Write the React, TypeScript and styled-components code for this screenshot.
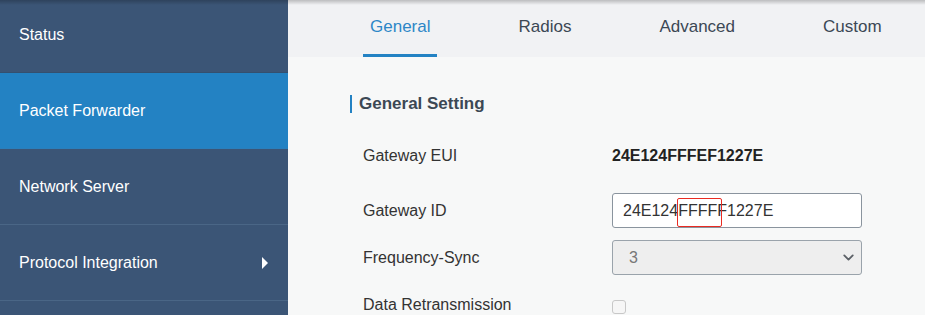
import { ChevronDown } from 'lucide-react';
import styled, { createGlobalStyle } from 'styled-components';

const GlobalStyle = createGlobalStyle`
  html, body {
    margin: 0;
    padding: 0;
    background: #f7f8f8;
    font-family: Arial, 'Liberation Sans', sans-serif;
  }
  * {
    box-sizing: border-box;
  }
`;

const menu = [
  { label: 'Status' },
  { label: 'Packet Forwarder', active: true },
  { label: 'Network Server' },
  { label: 'Protocol Integration', arrow: true },
];

const tabs = ['General', 'Radios', 'Advanced', 'Custom'];

export default function App() {
  return (
    <>
      <GlobalStyle />
      <Page>
        <Sidebar>
          <MenuList>
            {menu.map((item) => (
              <MenuItem key={item.label} $active={item.active}>
                {item.label}
                {item.arrow && (
                  <Arrow width="6" height="12" viewBox="0 0 6 12">
                    <polygon points="0,0 6,6 0,12" fill="#fff" />
                  </Arrow>
                )}
              </MenuItem>
            ))}
          </MenuList>
        </Sidebar>
        <Main>
          <TabBar>
            {tabs.map((t, i) => (
              <Tab key={t} $active={i === 0}>
                {t}
              </Tab>
            ))}
          </TabBar>
          <Content>
            <SectionTitle>General Setting</SectionTitle>
            <Form>
              <Row $gap={20}>
                <Label>Gateway EUI</Label>
                <Value>24E124FFFEF1227E</Value>
              </Row>
              <Row $gap={12}>
                <Label>Gateway ID</Label>
                <InputWrap>
                  <TextInput defaultValue="24E124FFFFF1227E" />
                  <Highlight />
                </InputWrap>
              </Row>
              <Row $gap={12}>
                <Label>Frequency-Sync</Label>
                <SelectBox>
                  <span>3</span>
                  <ChevronDown size={17} strokeWidth={2.6} color="#5b6066" />
                </SelectBox>
              </Row>
              <Row $gap={0}>
                <Label>Data Retransmission</Label>
                <Checkbox />
              </Row>
            </Form>
          </Content>
        </Main>
      </Page>
    </>
  );
}

const Page = styled.div`
  display: flex;
  width: 925px;
  height: 315px;
  overflow: hidden;
  position: relative;

  &::after {
    content: '';
    position: absolute;
    left: 0;
    right: 0;
    top: 0;
    height: 5px;
    background: linear-gradient(rgba(0, 0, 0, 0.22), rgba(0, 0, 0, 0));
    pointer-events: none;
  }
`;

const Sidebar = styled.nav`
  width: 288px;
  flex-shrink: 0;
  background: #3b5576;
  overflow: hidden;
`;

const MenuList = styled.div`
  margin-top: -3px;
`;

const MenuItem = styled.div<{ $active?: boolean }>`
  height: 76px;
  display: flex;
  align-items: center;
  justify-content: space-between;
  padding: 0 20px 0 19px;
  font-size: 16px;
  color: #fff;
  background: ${(p) => (p.$active ? '#2382c3' : '#3b5576')};
  border-bottom: 1px solid ${(p) => (p.$active ? '#2a7fbc' : '#4a6686')};

  &:first-child {
    border-bottom-color: #34506f;
  }
`;

const Arrow = styled.svg`
  display: block;
`;

const Main = styled.main`
  flex: 1;
  display: flex;
  flex-direction: column;
  background: #f7f8f8;
`;

const TabBar = styled.div`
  height: 57px;
  flex-shrink: 0;
  background: #f1f2f4;
  display: flex;
  align-items: stretch;
  gap: 74px;
  padding-left: 75px;
`;

const Tab = styled.div<{ $active?: boolean }>`
  padding: 0 7px;
  display: flex;
  align-items: center;
  font-size: 17px;
  color: ${(p) => (p.$active ? '#2d87c7' : '#3c4854')};
  border-bottom: 3px solid ${(p) => (p.$active ? '#2382c3' : 'transparent')};
`;

const Content = styled.div`
  flex-shrink: 0;
  padding: 38px 0 0 62px;
`;

const SectionTitle = styled.h2`
  margin: 0;
  height: 18px;
  line-height: 18px;
  font-size: 17px;
  font-weight: bold;
  color: #3c4854;
  border-left: 2px solid #2382c3;
  padding-left: 7px;
`;

const Form = styled.div`
  padding: 25px 0 0 13px;
`;

const Row = styled.div<{ $gap: number }>`
  display: flex;
  align-items: center;
  height: 35px;
  margin-bottom: ${(p) => p.$gap}px;
`;

const Label = styled.div`
  width: 249px;
  font-size: 16px;
  color: #333;
`;

const Value = styled.div`
  font-size: 16px;
  font-weight: bold;
  color: #222;
`;

const InputWrap = styled.div`
  position: relative;
`;

const TextInput = styled.input`
  display: block;
  width: 250px;
  height: 35px;
  border: 1px solid #8a949e;
  border-radius: 3px;
  background: #fff;
  padding: 0 10px;
  font-family: Arial, 'Liberation Sans', sans-serif;
  font-size: 16px;
  color: #333;
  outline: none;
`;

const Highlight = styled.div`
  position: absolute;
  left: 65px;
  top: 5px;
  width: 45px;
  height: 29px;
  border: 1px solid #ea2b22;
  border-radius: 2px;
  pointer-events: none;
`;

const SelectBox = styled.div`
  width: 250px;
  height: 35px;
  border: 1px solid #9aa3ab;
  border-radius: 3px;
  background: #eeeeee;
  display: flex;
  align-items: center;
  justify-content: space-between;
  padding: 0 4px 0 16px;
  font-size: 16px;
  color: #777;
`;

const Checkbox = styled.div`
  width: 14px;
  height: 14px;
  margin-top: 4px;
  border: 1px solid #c8c8c8;
  border-radius: 3px;
  background: #f6f6f6;
`;
